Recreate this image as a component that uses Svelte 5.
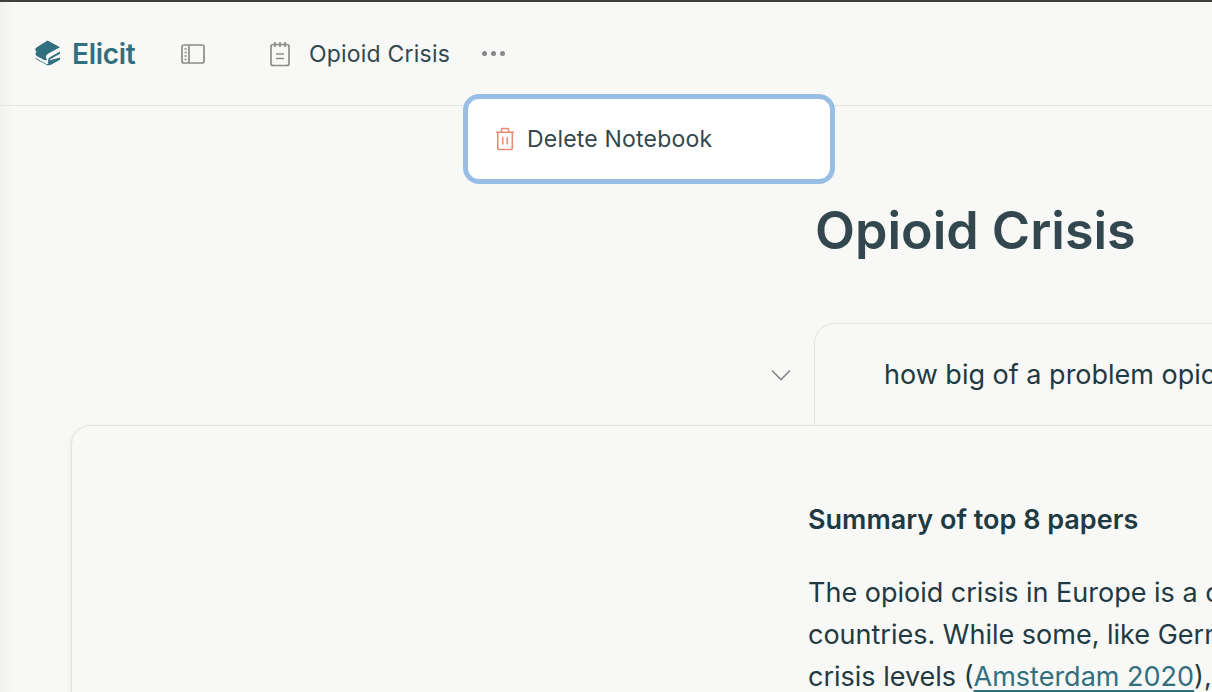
<script>
  let title = "Opioid Crisis";
  let query = "how big of a problem opioid crisis is in europe and how it compares to the united states";
</script>

<div class="page">
  <header class="topbar">
    <div class="brand">
      <svg class="logo" viewBox="0 0 30 30" width="30" height="30">
        <path fill="#326f7f" d="M15.5 1.5 28 8.2 16.5 14.5c-1.6.9-2.6 2.2-2.6 3.6 0 1 .4 1.8 1.2 2.5l-2 1-8-4.4c-1-.6-1.6-1.5-1.6-2.4 0-.8.4-1.5 1-2-.8-.7-1.2-1.5-1.2-2.3 0-1 .6-1.8 1.6-2.3z"/>
        <path fill="#326f7f" d="M28 12.6v2.2l-9.4 5.2c-1 .5-1.2 1.4-.6 2.1l-1.2.7c-1.1-1.6-.7-3.6 1-4.6z"/>
        <path fill="#326f7f" d="M28 18.6v2.2l-8.6 4.8c-1.4.8-3 1-4.4.4L4.6 20.400c-.8-.4-1.500-1-1.800-1.800l10.200 5.600c1.200.7 2.300.9 3.500.8-1-1.400-.9-2.700.4-3.500z"/>
      </svg>
      <span class="brand-name">Elicit</span>
    </div>
    <button class="icon-btn sidebar" aria-label="Toggle sidebar">
      <svg viewBox="0 0 24 20" width="24" height="20" fill="none" stroke="#8a8d8a" stroke-width="1.700">
        <rect x="1" y="1" width="22" height="18" rx="2"/>
        <path d="M8 1v18M3.500 5h2.200M3.500 8.500h2.200M3.500 12h2.200M3.500 15.500h2.200"/>
      </svg>
    </button>
    <div class="crumb">
      <svg viewBox="0 0 22 26" width="22" height="26" fill="none" stroke="#8a8d8a" stroke-width="1.700">
        <rect x="2" y="3.500" width="18" height="21" rx="2"/>
        <path d="M6 1v5M11 1v5M16 1v5M7 13h8M7 17.500h8"/>
      </svg>
      <span class="crumb-title">{title}</span>
      <span class="dots"><i></i><i></i><i></i></span>
    </div>
  </header>

  <div class="menu">
    <svg viewBox="0 0 22 26" width="20" height="24" fill="none" stroke="#ea8a73" stroke-width="1.700">
      <path d="M1 5.500h20M3 5.500v17a2 2 0 0 0 2 2h12a2 2 0 0 0 2-2v-17M7 5.500V3a1.500 1.500 0 0 1 1.500-1.500h5A1.500 1.500 0 0 1 15 3v2.500M8.500 11v8M13.500 11v8"/>
    </svg>
    <span>Delete Notebook</span>
  </div>

  <main class="content">
    <h1>{title}</h1>
    <div class="query-row">
      <svg class="chevron" viewBox="0 0 20 12" width="20" height="12" fill="none" stroke="#858a88" stroke-width="1.700">
        <path d="M1 1.500 10 10.500 19 1.500"/>
      </svg>
      <div class="query">
        <svg viewBox="0 0 24 24" width="24" height="24" fill="none" stroke="#5795a3" stroke-width="2.200" stroke-linecap="round">
          <circle cx="11" cy="11" r="8"/>
          <path d="M17 17l4.500 4.500"/>
        </svg>
        <span>{query}</span>
      </div>
    </div>
    <section class="panel">
      <div class="summary">
        <h2>Summary of top 8 papers</h2>
        <p>
          The opioid crisis in Europe is a complex issue with significant variation between<br />
          countries. While some, like Germany, report stable use, others approach<br />
          crisis levels (<a href="#amsterdam">Amsterdam 2020</a>), with rising overdose deaths
        </p>
      </div>
    </section>
  </main>
</div>

<style>
  :global(body) {
    margin: 0;
    background: #f8f8f6;
    font-family: Inter, "Liberation Sans", sans-serif;
  }

  .page {
    position: relative;
    width: 1212px;
    height: 692px;
    overflow: hidden;
    box-sizing: border-box;
    border-top: 2px solid #3f3f3d;
    background: linear-gradient(90deg, #f1f1ef 0, #f8f8f6 14px);
    color: #33484e;
  }

  .topbar {
    display: flex;
    align-items: center;
    height: 104px;
    box-sizing: border-box;
    padding-left: 32px;
    border-bottom: 1px solid #e4e4e2;
  }

  .brand {
    display: flex;
    align-items: center;
    gap: 10px;
    width: 149px;
  }

  .logo {
    flex: none;
  }

  .brand-name {
    color: #326f7f;
    font-size: 28px;
    font-weight: 600;
    letter-spacing: -0.3px;
  }

  .icon-btn {
    display: flex;
    padding: 0;
    border: none;
    background: none;
  }

  .sidebar {
    width: 88px;
  }

  .crumb {
    display: flex;
    align-items: center;
  }

  .crumb-title {
    margin-left: 18px;
    font-size: 23px;
    font-weight: 400;
    letter-spacing: 0.2px;
  }

  .dots {
    display: flex;
    gap: 4px;
    margin-left: 32px;
  }

  .dots i {
    width: 5px;
    height: 5px;
    border-radius: 50%;
    background: #858a88;
  }

  .menu {
    position: absolute;
    top: 92px;
    left: 463px;
    display: flex;
    align-items: center;
    gap: 12px;
    width: 372px;
    height: 90px;
    box-sizing: border-box;
    padding-left: 27px;
    border: 5px solid #98bee6;
    border-radius: 16px;
    background: #fff;
    font-size: 23px;
    letter-spacing: 0.2px;
  }

  .content {
    display: flex;
    flex-direction: column;
  }

  h1 {
    margin: 87px 0 0 815px;
    font-size: 52px;
    line-height: 76px;
    font-weight: 600;
    white-space: nowrap;
  }

  .query-row {
    display: flex;
    margin-top: 54px;
    height: 102px;
  }

  .chevron {
    margin: 46px 23px 0 771px;
    flex: none;
  }

  .query {
    display: flex;
    align-items: center;
    gap: 22px;
    flex: none;
    width: 900px;
    height: 102px;
    box-sizing: border-box;
    padding: 0 0 0 47px;
    border: 1px solid #e4e4e2;
    border-bottom: none;
    border-radius: 20px 20px 0 0;
    color: #1f3a42;
    font-size: 27px;
    white-space: nowrap;
  }

  .panel {
    width: 1400px;
    height: 400px;
    margin-left: 71px;
    box-sizing: border-box;
    padding: 70px 0 0 736px;
    border: 1px solid #e4e4e2;
    border-radius: 20px 0 0 0;
    background: #f8f8f6;
    box-shadow: -1px 1px 4px rgba(0, 0, 0, 0.06);
  }

  .summary {
    width: 1000px;
    color: #1f3a42;
  }

  h2 {
    margin: 0 0 28px;
    font-size: 27px;
    line-height: 48px;
    font-weight: 600;
  }

  p {
    margin: 0;
    font-size: 27px;
    line-height: 42px;
    white-space: nowrap;
  }

  a {
    color: #326f7f;
    text-decoration-thickness: 2px;
    text-underline-offset: 4px;
  }
</style>
